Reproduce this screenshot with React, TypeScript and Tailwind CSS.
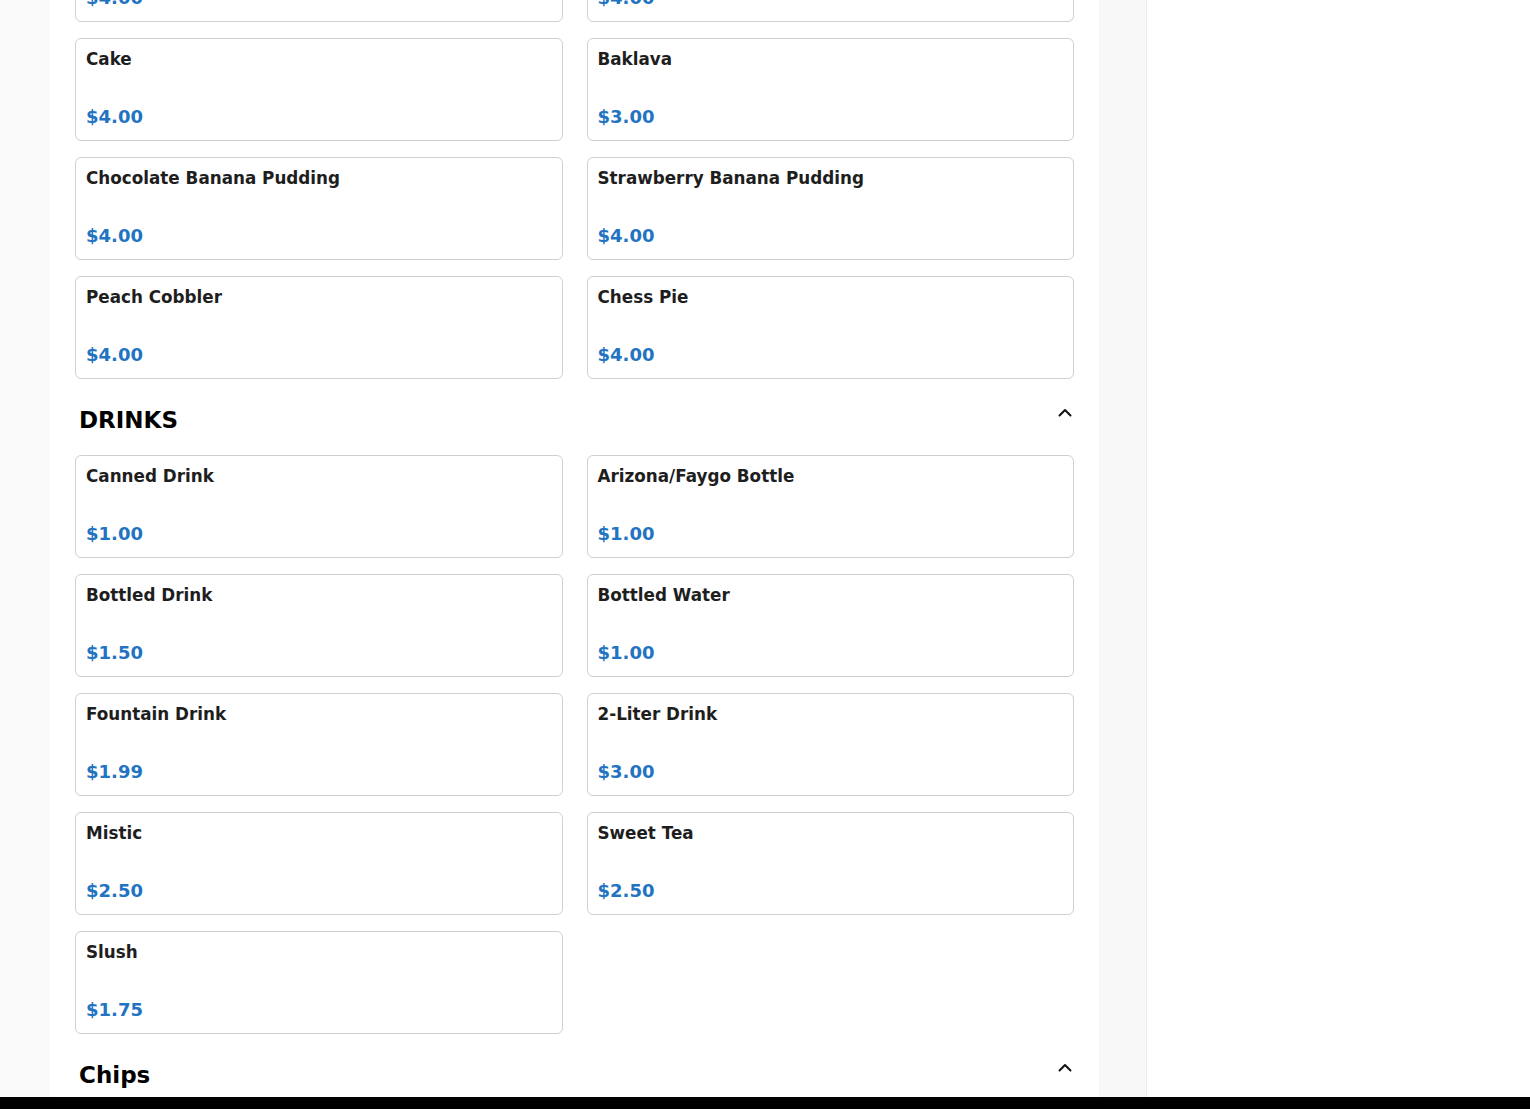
import React from "react";

type Item = { name: string; price: string };

const desserts: Item[] = [
  { name: "Brownie", price: "$4.00" },
  { name: "Cookies", price: "$4.00" },
  { name: "Cake", price: "$4.00" },
  { name: "Baklava", price: "$3.00" },
  { name: "Chocolate Banana Pudding", price: "$4.00" },
  { name: "Strawberry Banana Pudding", price: "$4.00" },
  { name: "Peach Cobbler", price: "$4.00" },
  { name: "Chess Pie", price: "$4.00" },
];

const drinks: Item[] = [
  { name: "Canned Drink", price: "$1.00" },
  { name: "Arizona/Faygo Bottle", price: "$1.00" },
  { name: "Bottled Drink", price: "$1.50" },
  { name: "Bottled Water", price: "$1.00" },
  { name: "Fountain Drink", price: "$1.99" },
  { name: "2-Liter Drink", price: "$3.00" },
  { name: "Mistic", price: "$2.50" },
  { name: "Sweet Tea", price: "$2.50" },
  { name: "Slush", price: "$1.75" },
];

function Chevron() {
  return (
    <svg width="16" height="16" viewBox="0 0 16 16" fill="none" className="mt-[-2px]">
      <polyline
        points="2.5,10.5 8,5 13.5,10.5"
        stroke="#111"
        strokeWidth="2"
        strokeLinecap="round"
        strokeLinejoin="round"
      />
    </svg>
  );
}

function ItemCard({ item }: { item: Item }) {
  return (
    <div className="flex h-[103px] flex-col justify-between rounded-md border border-[#cfcfcf] bg-white px-[10px] pt-[10px] pb-[11px]">
      <div className="text-[16.8px] leading-[20px] font-bold text-[#1e1e1e]">{item.name}</div>
      <div className="text-[18px] leading-[24px] font-bold text-[#2273c2]">{item.price}</div>
    </div>
  );
}

function SectionHeader({ title }: { title: string }) {
  return (
    <div className="mt-[28px] mb-[22px] flex items-start justify-between pl-[4px] pr-[1px]">
      <h2 className="text-[23px] leading-[26px] font-bold text-black">{title}</h2>
      <Chevron />
    </div>
  );
}

function ItemGrid({ items }: { items: Item[] }) {
  return (
    <div className="grid grid-cols-2 gap-x-6 gap-y-4">
      {items.map((item) => (
        <ItemCard key={item.name} item={item} />
      ))}
    </div>
  );
}

export default function App() {
  return (
    <div className="relative flex h-[1109px] overflow-hidden bg-white font-['DejaVu_Sans',sans-serif]">
      <div className="w-[50px] shrink-0 bg-[#fafafa]" />
      <main className="w-[1049px] shrink-0 bg-white px-[25px]">
        {/* list is scrolled down past the earlier dessert rows */}
        <div className="mt-[-81px]">
          <ItemGrid items={desserts} />
          <SectionHeader title="DRINKS" />
          <ItemGrid items={drinks} />
          <SectionHeader title="Chips" />
        </div>
      </main>
      <div className="w-[48px] shrink-0 border-r border-[#ededed] bg-[#f8f8f8]" />
      <aside className="flex-1 bg-white" />
      <div className="fixed bottom-0 left-0 h-[12px] w-full bg-black" />
    </div>
  );
}
